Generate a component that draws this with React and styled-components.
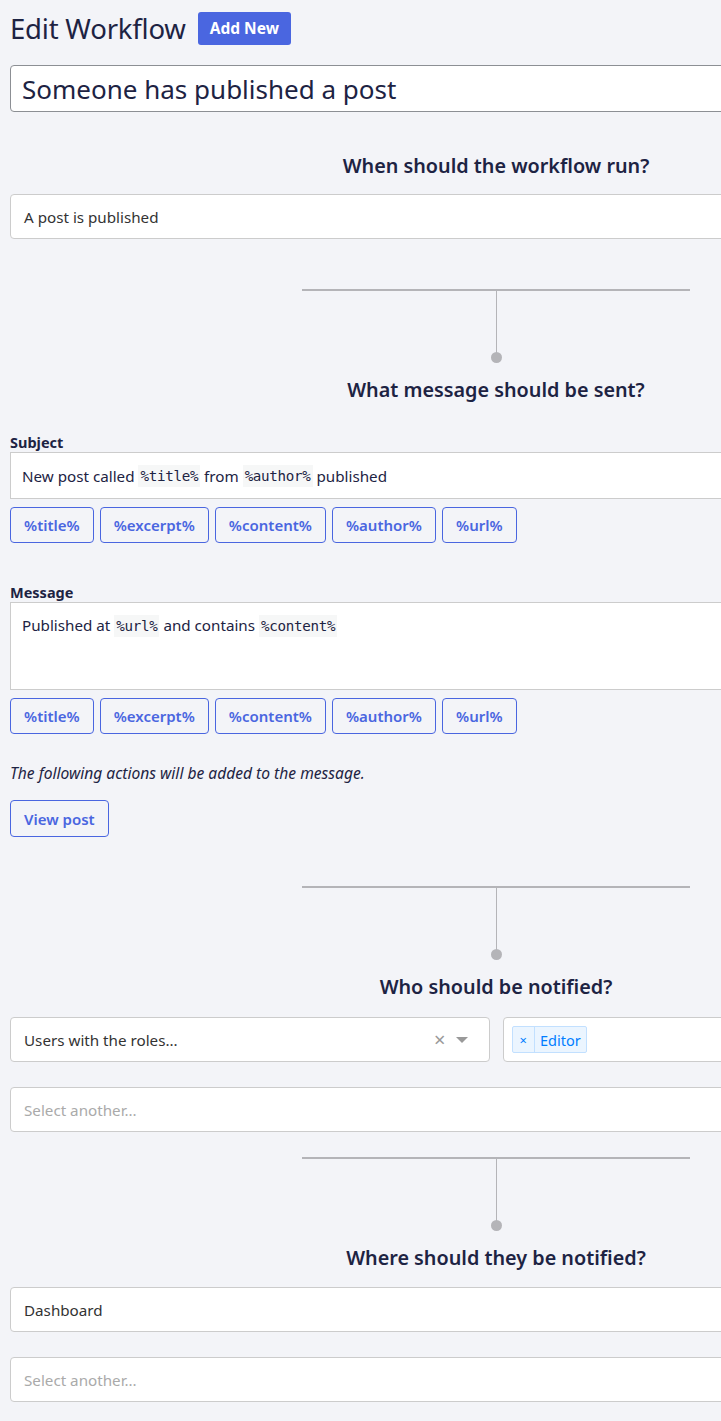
import React from "react";
import styled, { createGlobalStyle } from "styled-components";

const Global = createGlobalStyle`
  html, body { margin: 0; padding: 0; background: #f3f4f8; overflow-x: hidden; }
  body { font-family: "Noto Sans", "Open Sans", sans-serif; color: #1d2343; }
  * { box-sizing: border-box; }
`;

const BLUE = "#4a66e0";
const LINE = "#b4b4b8";

const Page = styled.div`
  width: 982px;
  padding: 10px 0 20px 10px;
`;

const TitleRow = styled.div`
  display: flex;
  align-items: center;
  gap: 12px;
  height: 38px;
`;

const PageTitle = styled.h1`
  margin: 0;
  font-size: 27.5px;
  font-weight: 400;
  line-height: 38px;
  color: #1d2343;
  letter-spacing: -0.2px;
`;

const PrimaryButton = styled.button`
  height: 33px;
  padding: 0 12px;
  border: none;
  border-radius: 3px;
  background: ${BLUE};
  color: #fff;
  font-family: inherit;
  font-size: 15.5px;
  font-weight: 700;
  margin-top: -2px;
`;

const TitleInput = styled.div`
  margin-top: 17px;
  height: 47px;
  border: 1px solid #8c8f94;
  border-radius: 4px;
  background: #fff;
  padding: 0 11px;
  display: flex;
  align-items: center;
  font-size: 26px;
  color: #1d2343;
`;

const Heading = styled.h2`
  margin: ${(p) => p.$top}px 0 0;
  text-align: center;
  font-size: 19.8px;
  font-weight: 600;
  line-height: 28px;
  color: #1d2343;
`;

const Select = styled.div`
  margin-top: ${(p) => p.$top || 0}px;
  height: 45px;
  border: 1px solid #ccc;
  border-radius: 4px;
  background: #fff;
  display: flex;
  align-items: center;
  padding: 0 13px;
  font-size: 15.2px;
  color: ${(p) => (p.$placeholder ? "#aaa" : "#333")};
`;

const SelectValue = styled.span`
  flex: 1;
`;

const Clear = styled.span`
  color: #999;
  font-size: 20px;
  line-height: 1;
  margin-right: 10px;
`;

const Arrow = styled.span`
  width: 0;
  height: 0;
  border-left: 6px solid transparent;
  border-right: 6px solid transparent;
  border-top: 6px solid #999;
  margin-right: 8px;
`;

const Connector = styled.div`
  margin-top: ${(p) => p.$top}px;
  display: flex;
  flex-direction: column;
  align-items: center;
`;

const HLine = styled.div`
  width: 40%;
  height: 2px;
  background: ${LINE};
`;

const VLine = styled.div`
  width: 1px;
  height: 62px;
  background: ${LINE};
`;

const Dot = styled.div`
  width: 11px;
  height: 11px;
  border-radius: 50%;
  background: ${LINE};
  margin-top: -1px;
`;

const Label = styled.div`
  margin-top: ${(p) => p.$top}px;
  font-size: 14.5px;
  font-weight: 700;
  line-height: 20px;
  color: #1d2343;
`;

const TextBox = styled.div`
  height: ${(p) => p.$h}px;
  border: 1px solid #ccc;
  background: #fff;
  padding: ${(p) => (p.$multi ? "12px 11px" : "0 11px")};
  display: flex;
  align-items: ${(p) => (p.$multi ? "flex-start" : "center")};
  font-size: 15.2px;
  color: #1d2343;
  white-space: pre;
`;

const Code = styled.code`
  font-family: "DejaVu Sans Mono", "Liberation Mono", monospace;
  font-size: 14.2px;
  background: #f6f7f7;
  padding: 3px 2px;
  letter-spacing: -0.3px;
`;

const TagRow = styled.div`
  display: flex;
  gap: 6px;
  margin-top: ${(p) => p.$top ?? 8}px;
`;

const OutlineButton = styled.button`
  height: ${(p) => p.$h || 36}px;
  padding: 0 13px;
  border: 1px solid ${BLUE};
  border-radius: 4px;
  background: transparent;
  color: ${BLUE};
  font-family: inherit;
  font-size: 15px;
  font-weight: 600;
`;

const Note = styled.p`
  margin: 29px 0 0;
  font-size: 15.6px;
  font-style: italic;
  line-height: 20px;
  color: #1d2343;
`;

const TwoCol = styled.div`
  margin-top: ${(p) => p.$top}px;
  display: grid;
  grid-template-columns: 1fr 1fr;
  gap: 13px;
`;

const MultiBox = styled.div`
  height: 45px;
  border: 1px solid #ccc;
  border-radius: 4px;
  background: #fff;
  display: flex;
  align-items: center;
  padding: 0 8px;
`;

const Chip = styled.span`
  display: inline-flex;
  align-items: stretch;
  height: 27px;
  border: 1px solid #c2e0ff;
  border-radius: 2px;
  background: #ebf5ff;
  color: #007eff;
  font-size: 14.5px;
`;

const ChipRemove = styled.span`
  display: flex;
  align-items: center;
  padding: 0 7px;
  border-right: 1px solid #c2e0ff;
  font-size: 13px;
`;

const ChipLabel = styled.span`
  display: flex;
  align-items: center;
  padding: 0 5px;
`;

const tags = ["%title%", "%excerpt%", "%content%", "%author%", "%url%"];

const Tags = () => (
  <TagRow>
    {tags.map((t) => (
      <OutlineButton key={t} type="button">{t}</OutlineButton>
    ))}
  </TagRow>
);

const Link = () => (
  <>
    <HLine />
    <VLine />
    <Dot />
  </>
);

export default function App() {
  return (
    <>
      <Global />
      <Page>
        <TitleRow>
          <PageTitle>Edit Workflow</PageTitle>
          <PrimaryButton type="button">Add New</PrimaryButton>
        </TitleRow>
        <TitleInput>Someone has published a post</TitleInput>

        <Heading $top={40}>When should the workflow run?</Heading>
        <Select $top={14}><SelectValue>A post is published</SelectValue></Select>

        <Connector $top={50}><Link /></Connector>
        <Heading $top={13}>What message should be sent?</Heading>

        <Label $top={28}>Subject</Label>
        <TextBox $h={47}>
          {"New post called "}<Code>%title%</Code>{" from "}<Code>%author%</Code>{" published"}
        </TextBox>
        <Tags />

        <Label $top={39}>Message</Label>
        <TextBox $h={88} $multi>
          <span>{"Published at "}<Code>%url%</Code>{" and contains "}<Code>%content%</Code></span>
        </TextBox>
        <Tags />

        <Note>The following actions will be added to the message.</Note>
        <TagRow $top={17}>
          <OutlineButton type="button" $h={37}>View post</OutlineButton>
        </TagRow>

        <Connector $top={49}><Link /></Connector>
        <Heading $top={13}>Who should be notified?</Heading>

        <TwoCol $top={16}>
          <Select>
            <SelectValue>Users with the roles...</SelectValue>
            <Clear>×</Clear>
            <Arrow />
          </Select>
          <MultiBox>
            <Chip>
              <ChipRemove>×</ChipRemove>
              <ChipLabel>Editor</ChipLabel>
            </Chip>
          </MultiBox>
        </TwoCol>
        <Select $top={25} $placeholder><SelectValue>Select another...</SelectValue></Select>

        <Connector $top={25}><Link /></Connector>
        <Heading $top={13}>Where should they be notified?</Heading>

        <Select $top={15}><SelectValue>Dashboard</SelectValue></Select>
        <Select $top={25} $placeholder><SelectValue>Select another...</SelectValue></Select>
      </Page>
    </>
  );
}
